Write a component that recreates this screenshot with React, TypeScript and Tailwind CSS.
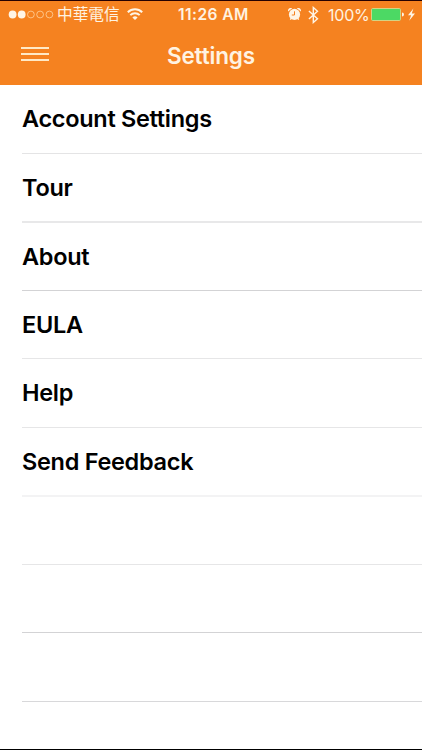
import type { ReactNode } from "react";

interface Row {
  label?: string;
  className: string;
}

// Rows are about 68.5px tall, so the hairline sometimes spreads over two pixels.
const rows: Row[] = [
  { label: "Account Settings", className: "h-[69px] border-b border-[#e4e4e5]" },
  { label: "Tour", className: "h-[69px] border-b-2 border-[#e8e8e9]" },
  { label: "About", className: "h-[68px] border-b border-[#d3d3d5]" },
  { label: "EULA", className: "h-[68px] border-b border-[#e6e6e7]" },
  { label: "Help", className: "h-[69px] border-b border-[#e6e6e7]" },
  { label: "Send Feedback", className: "h-[69px] border-b-2 border-[#f3f3f4]" },
  { className: "h-[68px] border-b border-[#e6e6e7]" },
  { className: "h-[68px] border-b border-[#d3d3d5]" },
  { className: "h-[69px] border-b border-[#d8d8da]" },
];

function SignalDots() {
  return (
    <svg className="shrink-0" width="46" height="10" viewBox="0 0 46 10">
      <circle cx="4.6" cy="4.5" r="3.9" fill="#fff5e6" />
      <circle cx="13.7" cy="4.5" r="3.9" fill="#fff5e6" />
      <g fill="none" stroke="#ffd3a0" strokeWidth="0.8">
        <circle cx="22.9" cy="4.5" r="3.4" />
        <circle cx="32.1" cy="4.5" r="3.4" />
        <circle cx="41.4" cy="4.5" r="3.4" />
      </g>
    </svg>
  );
}

function WifiIcon() {
  return (
    <svg className="shrink-0" width="16" height="13" viewBox="0 0 16 13">
      <g fill="none" stroke="#fff5e6" strokeWidth="2">
        <path d="M0.8 4.2a10.4 10.4 0 0 1 14.4 0" />
        <path d="M3.3 7.1a6.7 6.7 0 0 1 9.4 0" />
      </g>
      <path d="M5.4 9.4a3.8 3.8 0 0 1 5.2 0L8 12.1z" fill="#fff5e6" />
    </svg>
  );
}

function AlarmIcon() {
  return (
    <svg className="shrink-0" width="13" height="13" viewBox="0 0 13 13">
      <g fill="#fff5e6">
        <circle cx="6.5" cy="6.4" r="5.6" />
        <path d="M0.1 3.6A2.9 2.9 0 0 1 4.2 0.2zM12.9 3.6A2.9 2.9 0 0 0 8.8 0.2z" />
        <path d="M2.8 9.6l1.4 1-1.4 1.5-1-.8zM10.2 9.6l-1.4 1 1.4 1.5 1-.8z" />
      </g>
      <path d="M6.5 3.3v3.7H3.8" fill="none" stroke="#f58220" strokeWidth="1" />
    </svg>
  );
}

function BluetoothIcon() {
  return (
    <svg className="shrink-0" width="11" height="18" viewBox="0 0 11 18">
      <path
        d="M0.9 4.9l8.6 7.8-4.2 3.8V1.5l4.2 3.8-8.6 7.8"
        fill="none"
        stroke="#fff5e6"
        strokeWidth="1.4"
      />
    </svg>
  );
}

function BatteryIcon() {
  return (
    <svg className="shrink-0" width="45" height="14" viewBox="0 0 45 14">
      <rect x="0.5" y="0.5" width="29" height="12" rx="1.2" fill="#4cd964" stroke="#d9d78c" strokeWidth="0.9" />
      <path d="M31 4.5a2 2 0 0 1 0 4z" fill="#fff5e6" />
      <path d="M42.4 0.5L37 7.3h3.1l-1.9 5.4 5.8-7.2h-3.2z" fill="#fff5e6" />
    </svg>
  );
}

function StatusBar() {
  return (
    <div className="grid h-[27px] grid-cols-[178px_72px_1fr] items-center text-[#fff3e2]">
      <div className="flex items-center pl-2">
        <SignalDots />
        <span className="ml-[3px] w-[63px] pb-px font-['Noto_Sans_CJK_TC',sans-serif] text-[15.7px] leading-5 whitespace-nowrap">
          中華電信
        </span>
        <span className="ml-[7px]">
          <WifiIcon />
        </span>
      </div>
      <span className="text-[15.5px] font-semibold tracking-[0.45px] whitespace-nowrap">11:26 AM</span>
      <div className="flex items-center pl-[38px]">
        <AlarmIcon />
        <span className="ml-[7px]">
          <BluetoothIcon />
        </span>
        <span className="ml-[9px] w-[43px] text-[16px] tracking-[-0.2px] whitespace-nowrap">100%</span>
        <BatteryIcon />
      </div>
    </div>
  );
}

function NavBar({ children }: { children: ReactNode }) {
  return (
    <div className="grid h-[57px] grid-cols-[1fr_auto_1fr] items-start">
      <button aria-label="Menu" className="mt-[19px] ml-[21px] flex w-7 flex-col gap-1">
        <span className="h-[2px] bg-[#ffe9c6]" />
        <span className="h-[2px] bg-[#ffe9c6]" />
        <span className="h-[2px] bg-[#ffe9c6]" />
      </button>
      <h1 className="mt-[12px] text-[22.5px] leading-8 font-semibold tracking-[-0.15px] text-[#fff3e2]">
        {children}
      </h1>
    </div>
  );
}

export default function App() {
  return (
    <div className="flex h-[750px] w-[422px] flex-col overflow-hidden border-b border-black bg-white font-['Inter',sans-serif] text-black">
      <header className="h-[85px] shrink-0 border-t border-[#250000] bg-[#f58220]">
        <StatusBar />
        <NavBar>Settings</NavBar>
      </header>
      <ul className="pl-[22px]">
        {rows.map((row, i) => (
          <li
            key={i}
            className={`flex items-center text-[23.5px] font-semibold tracking-[-0.3px] ${row.className}`}
          >
            {row.label}
          </li>
        ))}
      </ul>
    </div>
  );
}
